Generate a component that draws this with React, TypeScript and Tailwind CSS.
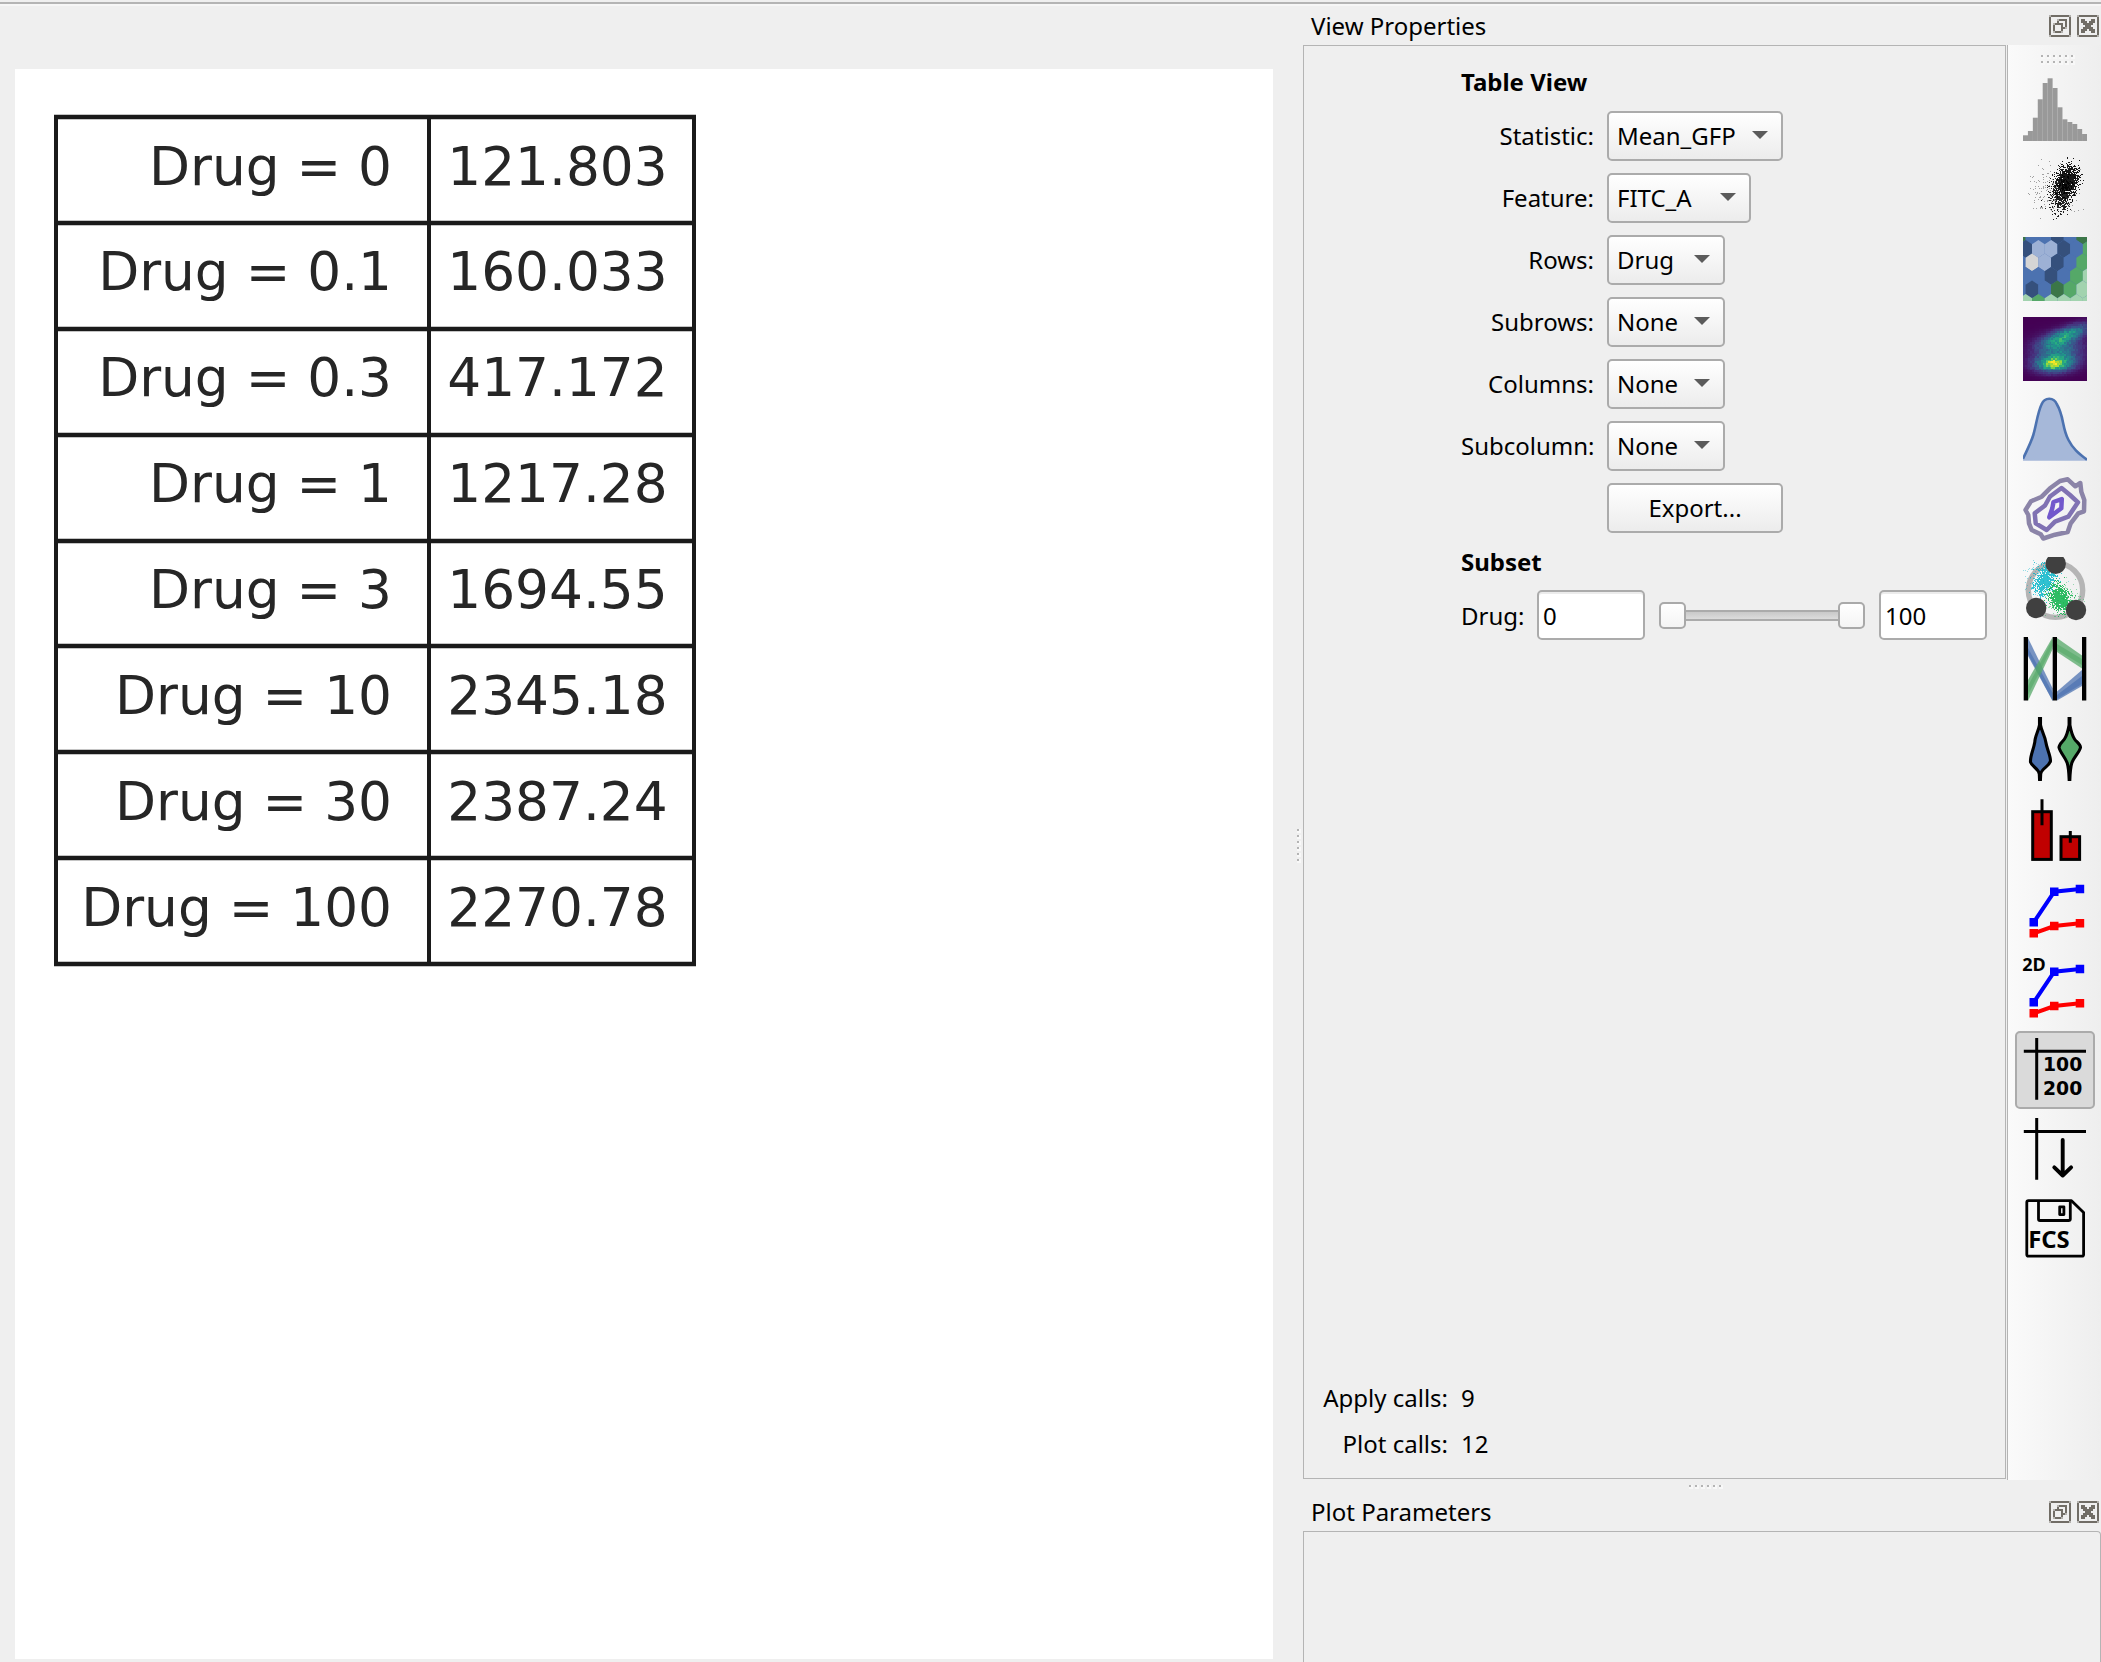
import React from "react";

const results: [string, string][] = [
  ["Drug = 0", "121.803"],
  ["Drug = 0.1", "160.033"],
  ["Drug = 0.3", "417.172"],
  ["Drug = 1", "1217.28"],
  ["Drug = 3", "1694.55"],
  ["Drug = 10", "2345.18"],
  ["Drug = 30", "2387.24"],
  ["Drug = 100", "2270.78"],
];

/* Deterministic random numbers for the point-cloud icons. */
function makeRandom(seed: number) {
  let s = seed;
  return () => {
    s = (s * 1664525 + 1013904223) % 4294967296;
    return s / 4294967296;
  };
}

function cloud(seed: number, n: number, cx: number, cy: number, sx: number, sy: number, tilt: number) {
  const r = makeRandom(seed);
  const normal = () => Math.sqrt(-2 * Math.log(r() + 1e-9)) * Math.cos(6.28318 * r());
  let d = "";
  for (let i = 0; i < n; i++) {
    const v = normal();
    const x = cx + normal() * sx + v * tilt;
    const y = cy + v * sy;
    if (x >= 0 && x <= 63 && y >= 0 && y <= 63) d += `M${Math.floor(x)} ${Math.floor(y)}h1v1h-1z`;
  }
  return d;
}

function Icon({ children, overflow = "overflow-hidden" }: { children: React.ReactNode; overflow?: string }) {
  return (
    <svg viewBox="0 0 64 64" className={`block size-16 shrink-0 ${overflow}`}>
      {children}
    </svg>
  );
}

function HistogramIcon() {
  const tops = [58.3, 54, 40.7, 22.3, 6, 1.3, 11, 30.3, 42.3, 45, 47, 52, 57];
  return (
    <Icon>
      {tops.map((t, i) => (
        <rect key={i} x={i * 4.923} y={t} width={5} height={64 - t} fill="#999" />
      ))}
    </Icon>
  );
}

function ScatterIcon() {
  return (
    <Icon>
      <path d={cloud(7, 1000, 44.5, 23, 5.4, 7.5, -1)} fill="#000" fillOpacity=".9" />
      <path d={cloud(19, 650, 39, 37, 6, 9, -1)} fill="#000" fillOpacity=".85" />
      <path d={cloud(31, 200, 29, 32, 13, 13, 0)} fill="#000" fillOpacity=".35" />
    </Icon>
  );
}

function HexbinIcon() {
  const B = "#4c72b0", D = "#35507c", L = "#9db1d5", G = "#55a868", K = "#3b7648", P = "#a2d3af", W = "#d5d5d5";
  const rows = [
    [K, B, B, D, B, K],
    [D, L, L, D, B, G],
    [B, W, L, D, B, G],
    [B, B, D, B, G, P],
    [B, D, B, K, G, P],
    [P, G, P, P, P, P],
  ];
  return (
    <Icon>
      <rect width="64" height="64" fill="#4c72b0" />
      {rows.map((row, j) =>
        row.map((c, i) => {
          const x = (j % 2 ? 2.7 : -3.7) + i * 12.7;
          const y = -1.7 + j * 13.5;
          return (
            <polygon
              key={`${j}-${i}`}
              points={`${x},${y - 8.9} ${x + 6.4},${y - 4.6} ${x + 6.4},${y + 4.6} ${x},${y + 8.9} ${x - 6.4},${y + 4.6} ${x - 6.4},${y - 4.6}`}
              fill={c}
            />
          );
        })
      )}
    </Icon>
  );
}

const viridis = [
  [68, 1, 84],
  [71, 45, 123],
  [59, 82, 139],
  [44, 114, 142],
  [33, 145, 140],
  [40, 174, 128],
  [94, 201, 98],
  [173, 220, 48],
  [253, 231, 37],
];

function DensityIcon() {
  const n = 36;
  const r = makeRandom(5);
  const cell = 64 / n;
  const cells: React.ReactNode[] = [];
  const bump = (x: number, y: number, cx: number, cy: number, sx: number, sy: number, k: number) => {
    const dx = x - cx;
    const dy = y - cy - k * dx;
    return Math.exp(-(dx * dx) / (2 * sx * sx) - (dy * dy) / (2 * sy * sy));
  };
  for (let j = 0; j < n; j++) {
    for (let i = 0; i < n; i++) {
      const x = (i + 0.5) * cell;
      const y = (j + 0.5) * cell;
      let v =
        0.68 * bump(x, y, 31, 47, 13, 5.5, -0.03) +
        0.5 * bump(x, y, 44, 18, 15, 5.5, -0.33) +
        0.38 * bump(x, y, 36, 33, 16, 9, 0) +
        0.2 * bump(x, y, 30, 47, 4, 3, 0);
      v = Math.max(0, Math.min(0.999, v * (0.82 + 0.36 * r())));
      const p = v * 8;
      const a = viridis[Math.floor(p)];
      const b = viridis[Math.floor(p) + 1];
      const f = p - Math.floor(p);
      const c = a.map((q, k) => Math.round(q + (b[k] - q) * f));
      cells.push(
        <rect key={`${j}-${i}`} x={i * cell} y={j * cell} width={cell + 0.1} height={cell + 0.1} fill={`rgb(${c.join(",")})`} />
      );
    }
  }
  return (
    <Icon>
      <g shapeRendering="crispEdges">{cells}</g>
    </Icon>
  );
}

function KdeIcon() {
  const line = "M0 61.7C4 53 7.5 47 10.3 38C13.5 27 14.5 16 18.5 7.5C21.5 -.2 31 -.2 34 7.5C41 19 39 31 45.5 43C50 52 56 56.5 64 62.8";
  return (
    <Icon>
      <path d={`${line}V63.8H0Z`} fill="#a6b8d9" />
      <path d={line} fill="none" stroke="#4c72b0" strokeWidth="2.6" />
    </Icon>
  );
}

function ContourIcon() {
  return (
    <Icon>
      <g fill="none" strokeWidth="4.5" strokeLinejoin="round">
        <path
          stroke="#8b84a8"
          d="M2.5 33L8 24.3L18.7 19.7L27 11.3L37 4L44.7 2.3L52.3 9.3L57.3 6L58.3 14.7L61.3 23L61 34.3L55.3 36.3L47.7 46.3L44.7 55L32 57.7L20.3 61.5L17.7 57.3L8.7 53L6 46.3L5.3 38Z"
        />
        <path stroke="#8072b3" d="M38.5 11L47 18L55 25.3L45.3 39.7L32 44.7L23.7 53L12.7 46.3L11.7 36.3L22 28.5L27 19.5Z" />
        <path stroke="#7258cc" d="M30.5 25L38.8 22L38.3 31.3L26.3 40.3L29.3 31.3Z" />
      </g>
    </Icon>
  );
}

function RadvizIcon() {
  return (
    <Icon>
      <circle cx="32.5" cy="33.2" r="27.2" fill="none" stroke="#b5b5b5" strokeWidth="5.4" />
      <path d={cloud(3, 800, 22, 22, 4.8, 8, -2.5)} fill="#00b4c8" fillOpacity=".8" />
      <path d={cloud(11, 140, 18, 22, 10, 11, 0)} fill="#00b4c8" fillOpacity=".4" />
      <path d={cloud(23, 800, 36.5, 41, 5, 6.5, 1)} fill="#0db14b" fillOpacity=".85" />
      <path d={cloud(41, 140, 40, 44, 9, 10, 0)} fill="#0db14b" fillOpacity=".4" />
      <g fill="#404040">
        <circle cx="32.7" cy="6.7" r="10.2" />
        <circle cx="13.2" cy="51" r="10.2" />
        <circle cx="53" cy="53" r="10.2" />
      </g>
    </Icon>
  );
}

function ParallelIcon() {
  return (
    <Icon>
      <g fill="#4c72b0">
        <path fillOpacity=".75" d="M5 1L5 19L29.7 64L29.7 51.5Z" />
        <path fillOpacity=".7" d="M5 11L5 17L29.7 64L29.7 56Z" />
        <path fillOpacity=".75" d="M34 54.5L59 33V49L34 63.5Z" />
        <path fillOpacity=".7" d="M34 58L59 39V47L34 62Z" />
      </g>
      <g fill="#55a868">
        <path fillOpacity=".75" d="M5 43L29.7 0V12L5 64Z" />
        <path fillOpacity=".6" d="M5 49L29.7 2V9L5 58Z" />
        <path fillOpacity=".75" d="M34 1L59 18.5V31.5L34 15Z" />
        <path fillOpacity=".6" d="M34 7L59 22V28L34 13Z" />
      </g>
      <path d="M.7 0H5V63.5H.7ZM29.7 0H34V63.5H29.7ZM59 0H63.3V63.5H59Z" fill="#000" />
    </Icon>
  );
}

function ViolinIcon() {
  return (
    <Icon>
      <g stroke="#000" strokeWidth="3.1" strokeLinejoin="round">
        <path
          fill="#4c72b0"
          d="M16.5 0V8C15.5 14 12 19 11.8 25C10.5 33 7 39 7.5 45C9 50 15.5 51 16.3 57L16.6 63.5H17.4L17.7 57C18.5 51 26 50 27.5 44C27.5 38 23.8 32 22.8 25C22 19 18.5 14 17.5 8V0Z"
        />
        <path
          fill="#55a868"
          d="M46.1 0V8C45 14 43.5 19 41.5 22C39.5 25 36 27 36 30.5C37 35 42.5 41 44.2 46C45.8 51 46 58 46.2 63.5H46.8C47 58 47.2 51 48.8 46C50.5 41 56.5 35 57.5 30.5C57.3 27 53.5 25 51.5 22C49.5 19 48 14 46.9 8V0Z"
        />
      </g>
    </Icon>
  );
}

function BarIcon() {
  return (
    <Icon>
      <g fill="#c00000" stroke="#000" strokeWidth="3">
        <rect x="9.7" y="14.7" width="18.6" height="47.7" />
        <rect x="38" y="39.7" width="18.6" height="22.7" />
        <path d="M19 2.3V28.3M47.3 34V45.7" />
      </g>
    </Icon>
  );
}

function SeriesMarks() {
  return (
    <>
      <g fill="none" strokeWidth="4">
        <path stroke="#00f" d="M10.7 45.3L31.3 14.7L57 12" />
        <path stroke="#f00" d="M10.7 56.3L31.3 49L57 46.3" />
      </g>
      <path fill="#00f" d="M6.5 41h8.5v8.5h-8.5zM27 10.4h8.5v8.5h-8.5zM52.7 7.7h8.5v8.5h-8.5z" />
      <path fill="#f00" d="M6.5 52h8.5v8.5h-8.5zM27 44.7h8.5v8.5h-8.5zM52.7 42h8.5v8.5h-8.5z" />
    </>
  );
}

function TableIcon() {
  return (
    <Icon>
      <path d="M13.7 1V62.7M.8 14.2H63" stroke="#000" strokeWidth="3" />
      <g fontFamily="DejaVu Sans, sans-serif" fontWeight="700" fontSize="18.8">
        <text x="20" y="34">100</text>
        <text x="20" y="58">200</text>
      </g>
    </Icon>
  );
}

function ExportTableIcon() {
  return (
    <Icon>
      <path d="M13.7 1V62.7M.8 14.5H63" stroke="#000" strokeWidth="3" />
      <path d="M39.7 23V58.5M31.3 50.3L39.7 58.5L48.1 50.3" fill="none" stroke="#000" strokeWidth="3.9" strokeLinecap="round" strokeLinejoin="round" />
    </Icon>
  );
}

function FcsIcon() {
  return (
    <Icon>
      <g fill="none" stroke="#000" strokeWidth="2.8" strokeLinejoin="round">
        <path d="M5.5 3.7H48.5L60.6 15.5V57.5Q60.6 59.2 59 59.2H5.5Q3.8 59.2 3.8 57.5V5.4Q3.8 3.7 5.5 3.7Z" />
        <path d="M15.5 4V22Q15.5 23.5 17 23.5H45.5Q47.3 23.5 47.3 22V4" />
        <rect x="36.7" y="9.8" width="4.2" height="7.8" />
      </g>
      <text x="5.2" y="51.4" fontFamily="Noto Sans, sans-serif" fontWeight="700" fontSize="23.8">FCS</text>
    </Icon>
  );
}

function DockButton({ kind }: { kind: "float" | "close" }) {
  return (
    <svg viewBox="0 0 11 11" className="block size-[22px]" fill="none" shapeRendering="crispEdges">
      <path d="M1 .5H10M1 10.5H10M.5 1V10M10.5 1V10" stroke="#716d66" />
      <path d="M0 0h1v1H0zM10 0h1v1h-1zM0 10h1v1H0zM10 10h1v1h-1z" fill="#b4b2af" />
      {kind === "float" ? (
        <>
          <path d="M2.5 4.5H6.5V8.5H2.5Z" stroke="#716d66" />
          <path d="M4.5 4V2.5H8.5V6.5H7" stroke="#716d66" />
          <path d="M2 4h1v1H2zM2 8h1v1H2zM6 8h1v1H6zM4 2h1v1H4zM8 6h1v1H8z" fill="#b4b2af" />
        </>
      ) : (
        <path d="M2 2h2v1h1v1h1v-1h1v-1h2v2h-1v1h-1v1h1v1h1v2h-2v-1h-1v-1h-1v1h-1v1h-2v-2h1v-1h1v-1h-1v-1h-1z" fill="#716d66" />
      )}
    </svg>
  );
}

function DockTitle({ title }: { title: string }) {
  return (
    <div className="flex h-[39px] shrink-0 items-center justify-between pr-0.5 pl-2">
      <span>{title}</span>
      <div className="flex gap-1.5">
        <DockButton kind="float" />
        <DockButton kind="close" />
      </div>
    </div>
  );
}

function Dots({ className }: { className: string }) {
  return (
    <div className={`flex gap-0.5 ${className}`}>
      {[0, 1, 2, 3, 4, 5].map((i) => (
        <span key={i} className="block size-1 bg-[#f8f8f8]">
          <span className="block size-0.5 bg-[#b4b4b4]" />
        </span>
      ))}
    </div>
  );
}

const control = "h-[50px] rounded-[5px] border-2 border-[#ababab]";

function Field({ label, value, width }: { label: string; value: string; width: string }) {
  return (
    <div className="flex items-center gap-[13px]">
      <span className="mb-px w-[133px] text-right whitespace-nowrap">{label}</span>
      <div className={`flex items-center justify-between bg-linear-to-b from-white to-[#ececec] pr-[13px] pl-2 ${control} ${width}`}>
        <span className="mb-px">{value}</span>
        <svg viewBox="0 0 16 8" className="-mt-0.5 h-2 w-4">
          <path d="M0 0H16L8 8Z" fill="#5b5b5b" />
        </svg>
      </div>
    </div>
  );
}

const tools: { name: string; icon: React.ReactNode; selected?: boolean }[] = [
  { name: "histogram", icon: <HistogramIcon /> },
  { name: "scatter", icon: <ScatterIcon /> },
  { name: "hexbin", icon: <HexbinIcon /> },
  { name: "density", icon: <DensityIcon /> },
  { name: "kde", icon: <KdeIcon /> },
  { name: "contour", icon: <ContourIcon /> },
  { name: "radviz", icon: <RadvizIcon /> },
  { name: "parallel", icon: <ParallelIcon /> },
  { name: "violin", icon: <ViolinIcon /> },
  { name: "bar", icon: <BarIcon /> },
  { name: "stats1d", icon: <Icon><SeriesMarks /></Icon> },
  {
    name: "stats2d",
    icon: (
      <Icon overflow="overflow-visible">
        <SeriesMarks />
        <text x="-.8" y="13.8" fontFamily="Noto Sans, sans-serif" fontWeight="700" fontSize="18">2D</text>
      </Icon>
    ),
  },
  { name: "table", icon: <TableIcon />, selected: true },
  { name: "export-table", icon: <ExportTableIcon /> },
  { name: "fcs", icon: <FcsIcon /> },
];

function ResultsTable() {
  return (
    <div className="w-[642px] border-t-4 border-l-4 border-[#1a1a1a] font-['DejaVu_Sans',sans-serif] text-[53.3px] leading-[62px] text-[#262626] shadow-[0_-1px_0_#c4c4c4,0_1px_0_#c4c4c4]">
      {results.map(([label, value]) => (
        <div
          key={label}
          className="flex h-[105.875px] border-b-4 border-[#1a1a1a] whitespace-pre shadow-[inset_0_1px_0_#c4c4c4,inset_0_-1px_0_#c4c4c4]"
        >
          <div className="w-[373px] border-r-4 border-[#1a1a1a] pt-[16.6px] pr-[35px] text-right">{label}</div>
          <div className="flex-1 border-r-4 border-[#1a1a1a] pt-[16.6px] pl-[16.3px]">{value}</div>
        </div>
      ))}
    </div>
  );
}

function SliderHandle() {
  return <span className="h-[27px] w-[27px] shrink-0 rounded-[5px] border-2 border-[#a9a9a9] bg-linear-to-b from-white to-[#f4f4f4]" />;
}

export default function App() {
  return (
    <div className="flex h-[1662px] w-[2101px] flex-col overflow-hidden bg-[#efefef] font-['Noto_Sans',sans-serif] text-2xl leading-[33px] text-black">
      <div className="mt-0.5 h-1 shrink-0 border-t-2 border-b-2 border-t-[#b4b4b4] border-b-[#f6f6f6]" />
      <div className="flex min-h-0 flex-1">
        <main className="mt-[63px] ml-[15px] h-[1590px] w-[1258px] shrink-0 bg-white pt-[46px] pl-[39px]">
          <ResultsTable />
        </main>

        <div className="flex w-[30px] justify-end pt-[823px] pr-0.5">
          <Dots className="flex-col" />
        </div>

        <aside className="flex min-w-0 flex-1 flex-col">
          <DockTitle title="View Properties" />
          <div className="flex h-[1435px] shrink-0">
            <section className="flex h-[1434px] w-[703px] flex-col border border-[#b4b4b4] pt-[19px] pl-[18px]">
              <div className="flex flex-col gap-3 pl-[139px]">
                <h2 className="mb-px font-bold">Table View</h2>
                <Field label="Statistic:" value="Mean_GFP" width="w-[176px]" />
                <Field label="Feature:" value="FITC_A" width="w-[144px]" />
                <Field label="Rows:" value="Drug" width="w-[118px]" />
                <Field label="Subrows:" value="None" width="w-[118px]" />
                <Field label="Columns:" value="None" width="w-[118px]" />
                <Field label="Subcolumn:" value="None" width="w-[118px]" />
                <button className={`ml-[146px] w-[176px] bg-linear-to-b from-white to-[#ececec] pb-px ${control}`}>Export...</button>
                <h2 className="font-bold">Subset</h2>
                <div className="flex items-center">
                  <span className="w-[76px]">Drug:</span>
                  <div className={`flex w-[108px] items-center bg-white pl-1 shadow-[inset_0_2px_0_#ececec] ${control}`}>0</div>
                  <div className="mr-3.5 ml-[13.5px] flex w-[206.5px] items-center">
                    <SliderHandle />
                    <span className="h-[11px] flex-1 border-y-2 border-[#ababab] bg-linear-to-b from-[#c9c9c9] to-[#dcdcdc]" />
                    <SliderHandle />
                  </div>
                  <div className={`flex w-[108px] items-center bg-white pl-1 shadow-[inset_0_2px_0_#ececec] ${control}`}>100</div>
                </div>
              </div>
              <div className="mt-auto mb-[18px] flex flex-col gap-[13px]">
                <div className="flex gap-[13px]">
                  <span className="w-[126px] text-right">Apply calls:</span>
                  <span>9</span>
                </div>
                <div className="flex gap-[13px]">
                  <span className="w-[126px] text-right">Plot calls:</span>
                  <span>12</span>
                </div>
              </div>
            </section>
            <nav className="ml-px flex w-[94px] flex-col items-center border-l border-[#b4b4b4] bg-linear-to-r from-[#fafafa] to-[#eeeeee] pt-2.5">
              <Dots className="ml-[7px]" />
              <Dots className="mt-0.5 ml-[7px]" />
              <div className="mt-1.5 flex flex-col gap-0.5">
                {tools.map((t) => (
                  <div
                    key={t.name}
                    className={
                      t.selected
                        ? "flex h-[78px] w-20 items-start justify-center rounded-[5px] border-2 border-[#ababab] bg-[#dadada] pt-1"
                        : "flex h-[78px] w-20 items-start justify-center pt-1.5"
                    }
                  >
                    {t.icon}
                  </div>
                ))}
              </div>
            </nav>
          </div>
          <div className="flex h-3 shrink-0 justify-center pt-[5px]">
            <Dots className="ml-2" />
          </div>
          <DockTitle title="Plot Parameters" />
          <section className="flex-1 rounded-tr-sm border border-b-0 border-[#b4b4b4]" />
        </aside>
      </div>
    </div>
  );
}
